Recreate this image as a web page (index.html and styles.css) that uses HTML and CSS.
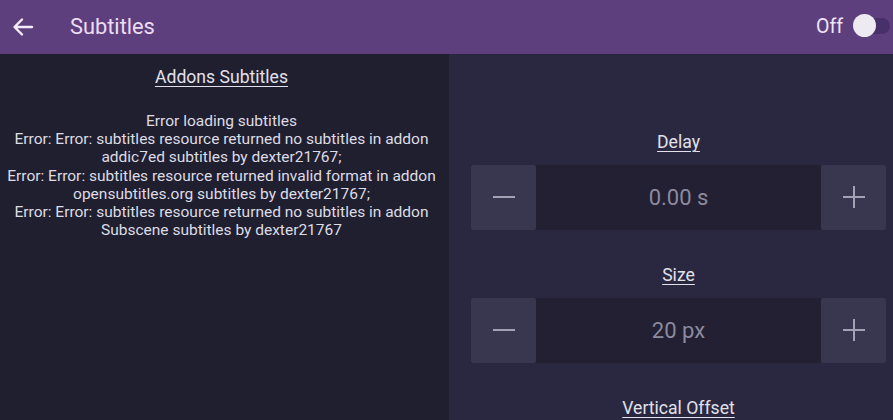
FILE: index.html
```html
<!DOCTYPE html>
<html lang="en">
<head>
    <meta charset="UTF-8">
    <meta name="viewport" content="width=device-width, initial-scale=1.0">
    <title>Subtitles</title>
    <link rel="stylesheet" href="styles.css">
</head>
<body>
    <header class="topbar">
        <button class="back" aria-label="Back">
            <svg width="24" height="24" viewBox="0 0 24 24">
                <path d="M21 12H4M11 4.5L3.5 12L11 19.5" fill="none" stroke="#f4ecf8" stroke-width="2.4" stroke-linecap="round" stroke-linejoin="round"/>
            </svg>
        </button>
        <h1 class="title">Subtitles</h1>
        <div class="switch-wrap">
            <span class="switch-label">Off</span>
            <span class="switch"><span class="knob"></span></span>
        </div>
    </header>

    <main class="panes">
        <section class="addons">
            <h2 class="heading">Addons Subtitles</h2>
            <p class="errors">
                Error loading subtitles<br>
                Error: Error: subtitles resource returned no subtitles in addon addic7ed subtitles by dexter21767;<br>
                Error: Error: subtitles resource returned invalid format in addon opensubtitles.org subtitles by dexter21767;<br>
                Error: Error: subtitles resource returned no subtitles in addon Subscene subtitles by dexter21767
            </p>
        </section>

        <section class="settings">
            <div class="setting">
                <h3 class="heading">Delay</h3>
                <div class="stepper">
                    <button class="step minus" aria-label="Decrease"></button>
                    <div class="value">0.00 s</div>
                    <button class="step plus" aria-label="Increase"></button>
                </div>
            </div>
            <div class="setting">
                <h3 class="heading">Size</h3>
                <div class="stepper">
                    <button class="step minus" aria-label="Decrease"></button>
                    <div class="value">20 px</div>
                    <button class="step plus" aria-label="Increase"></button>
                </div>
            </div>
            <div class="setting">
                <h3 class="heading">Vertical Offset</h3>
            </div>
        </section>
    </main>
</body>
</html>
```

FILE: styles.css
```css
body {
    margin: 0;
    font-family: Roboto, "Liberation Sans", sans-serif;
    background: #201f30;
    height: 420px;
    overflow: hidden;
}
.topbar {
    display: flex;
    align-items: center;
    height: 54px;
    background: #5e3f7e;
    padding: 0 3px 0 0;
    box-sizing: border-box;
}
.back {
    width: 46px;
    height: 46px;
    padding: 0 0 0 11px;
    border: none;
    background: none;
    display: flex;
    align-items: center;
    cursor: pointer;
}
.title {
    margin: 0 0 2px 24px;
    font-size: 21.8px;
    font-weight: 400;
    color: #ecdcf4;
    flex: 1;
}
.switch-wrap {
    display: flex;
    align-items: center;
    gap: 11px;
    margin-bottom: 2px;
}
.switch-label {
    font-size: 19.5px;
    color: #f0e6f6;
}
.switch {
    position: relative;
    width: 36px;
    height: 16px;
    border-radius: 8px;
    background: #48306a;
}
.knob {
    position: absolute;
    left: -1px;
    top: -4px;
    width: 23px;
    height: 23px;
    border-radius: 50%;
    background: #eeeaf2;
}
.panes {
    display: flex;
    height: 366px;
}
.addons {
    width: 449px;
    background: #201f30;
    text-align: center;
    padding: 13px 6px 0 0;
    box-sizing: border-box;
}
.heading {
    margin: 0;
    font-size: 17.6px;
    font-weight: 400;
    line-height: 21px;
    color: #e2e1ea;
    text-decoration: underline;
    text-underline-offset: 3px;
    text-decoration-thickness: 1px;
}
.errors {
    margin: 24px 0 0;
    font-size: 15.5px;
    line-height: 18.2px;
    color: #dddce4;
}
.settings {
    flex: 1;
    background: #2a2840;
    padding: 78px 7px 0 22px;
    display: flex;
    flex-direction: column;
    gap: 35px;
}
.setting {
    display: flex;
    flex-direction: column;
    gap: 12px;
    text-align: center;
}
.stepper {
    display: flex;
    height: 65px;
    background: #222032;
}
.step {
    position: relative;
    width: 65px;
    border: none;
    border-radius: 2px;
    background: #393750;
    cursor: pointer;
}
.step::before,
.plus::after {
    content: "";
    position: absolute;
    left: 22px;
    top: 31px;
    width: 22px;
    height: 2px;
    background: #a3a1b4;
}
.plus::after {
    left: 32px;
    top: 21px;
    width: 2px;
    height: 22px;
}
.value {
    flex: 1;
    display: flex;
    align-items: center;
    justify-content: center;
    font-size: 22px;
    color: #8c8a9e;
}
```
